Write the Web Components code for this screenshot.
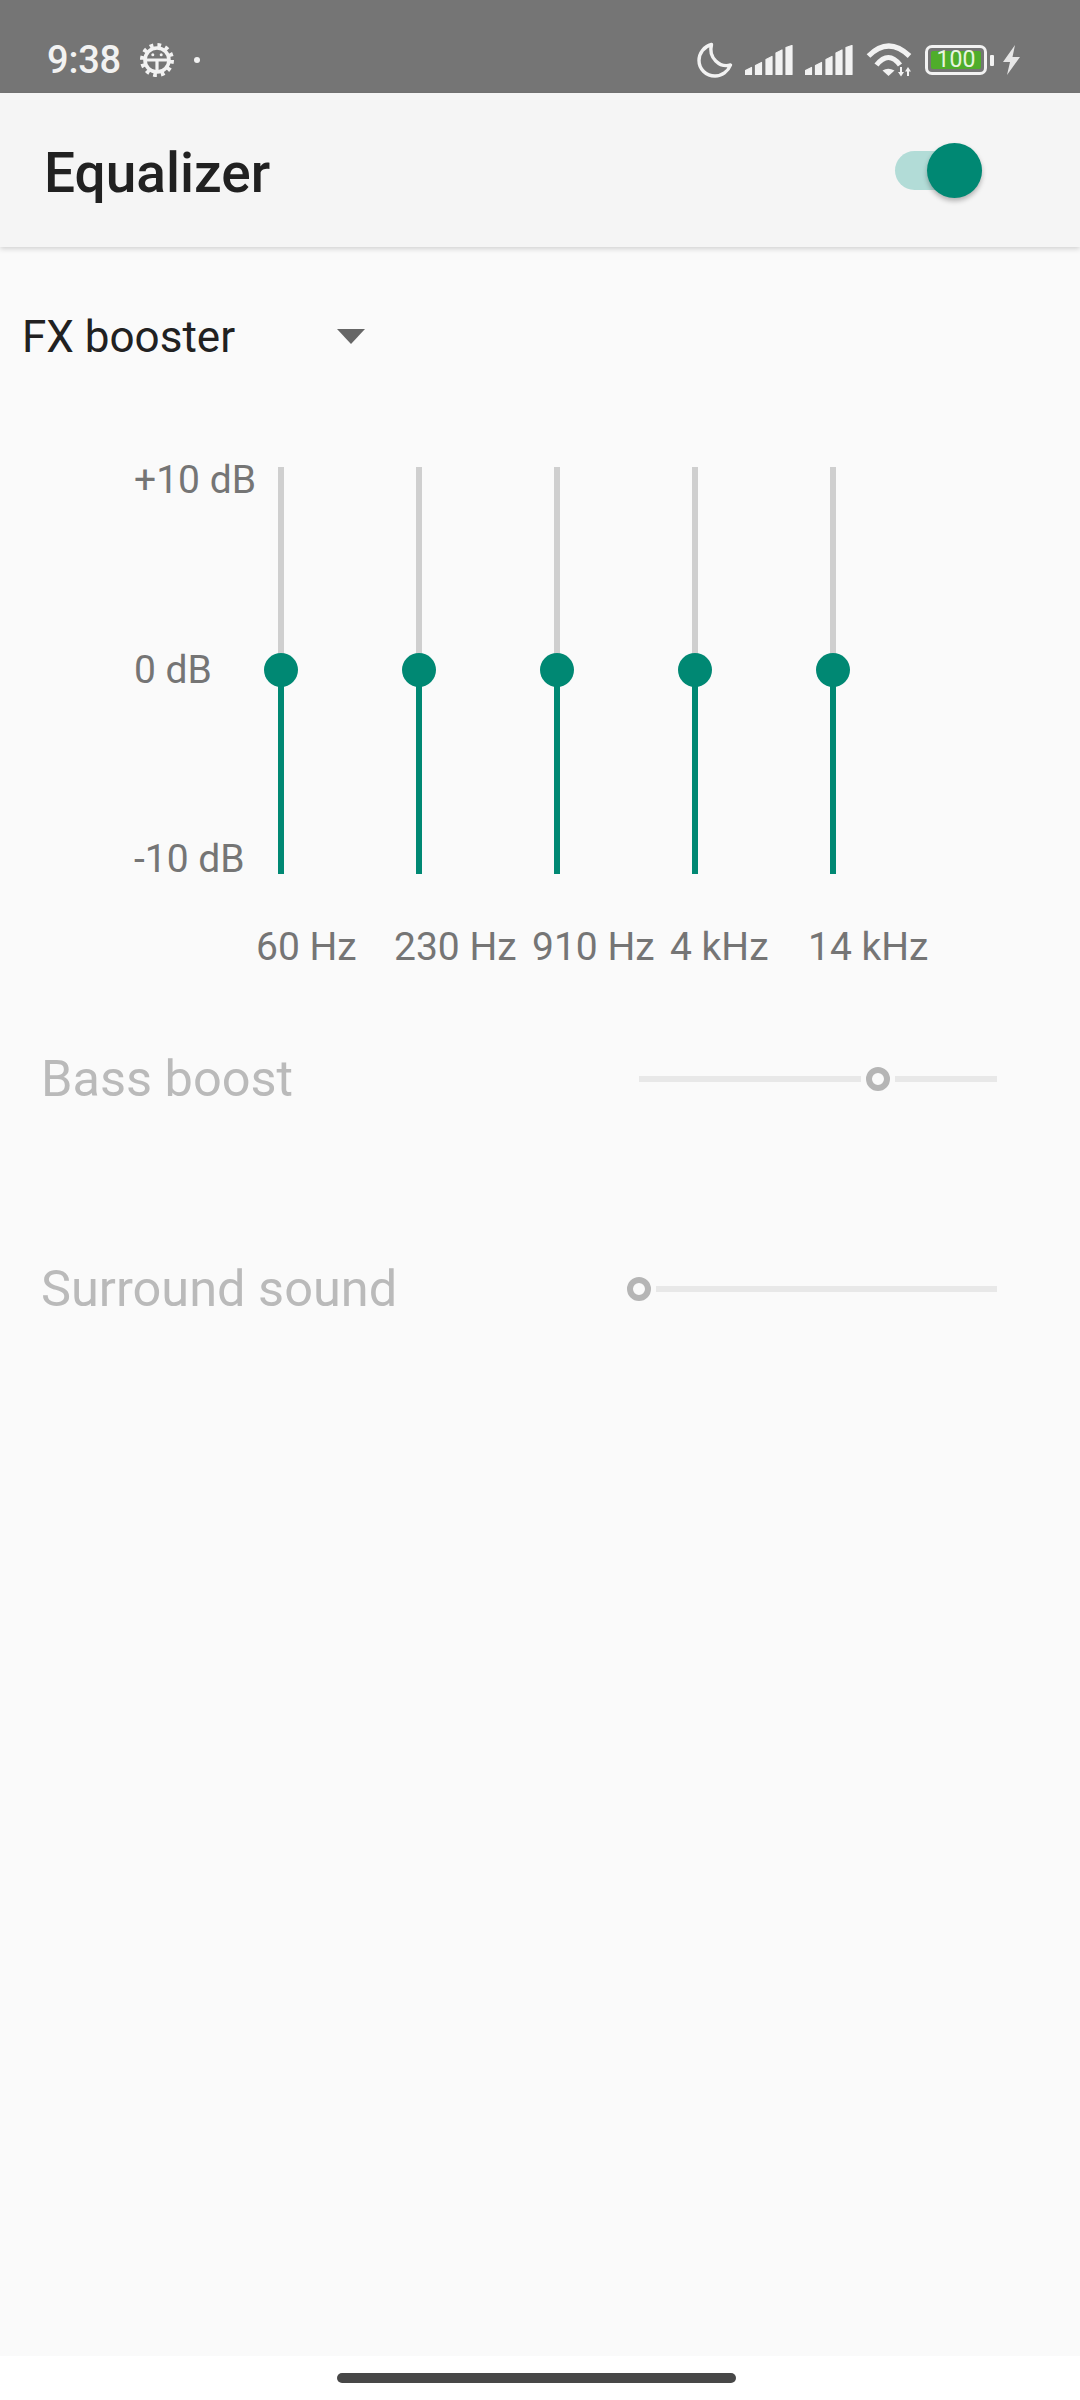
<!DOCTYPE html>
<html><head><meta charset="utf-8">
<style>
html,body{margin:0;padding:0;background:#fafafa}
body{width:1080px;height:2400px;display:flex;flex-direction:column;font-family:Roboto,"Liberation Sans",sans-serif;overflow:hidden}
</style></head><body>
<eq-status></eq-status>
<eq-appbar>Equalizer</eq-appbar>
<eq-main>
  <eq-preset>FX booster</eq-preset>
  <eq-bands></eq-bands>
  <eq-effect label="Bass boost" value="0.667" style="margin-top:80px"></eq-effect>
  <eq-effect label="Surround sound" value="0" style="margin-top:152px"></eq-effect>
</eq-main>
<eq-nav></eq-nav>
<script>
function def(name, html, init){
  customElements.define(name, class extends HTMLElement{
    constructor(){super();const r=this.attachShadow({mode:'open'});r.innerHTML=html;}
    connectedCallback(){if(init)init(this,this.shadowRoot);}
  });
}
const sig=`<svg width="48" height="30" viewBox="0 0 48 30"><g fill="#f2f2f2" stroke="#f2f2f2" stroke-width="1.200" stroke-linejoin="round"><path d="M.5 29.500V25.500L6.500 22.500V29.500Z"/><path d="M10.500 29.500V20.500L16.500 17.500V29.500Z"/><path d="M21 29.500V14.500L27 11.500V29.500Z"/><path d="M31 29.500V8L37 5V29.500Z"/><path d="M41 29.500V2.500L47 .5V29.500Z"/></g></svg>`;
def('eq-status',`<style>
:host{display:flex;align-items:center;box-sizing:border-box;height:93px;background:#757575;color:#f2f2f2;padding:27px 0 0 47px;flex:none}
.t{font:500 38px/1 Roboto,sans-serif;width:71px;letter-spacing:-.2px}
.gear{margin-left:22px;display:block}
.dot{width:6px;height:6px;border-radius:50%;background:#f2f2f2;margin-left:20px}
.r{margin-left:auto;display:flex;align-items:center;margin-right:59px;height:36px}
svg{display:block;flex:none}
.bat{position:relative;box-sizing:border-box;width:62px;height:30px;border:3px solid #f2f2f2;border-radius:7px;padding:3px;margin-left:13px;display:flex}
.bat b{flex:1;background:#4fad2b;border-radius:2px;font:400 23px/18px Roboto,sans-serif;color:#e8f5e0;text-align:center;letter-spacing:0}
.nub{width:4px;height:11px;background:#f2f2f2;border-radius:1px;margin-left:3px}
</style>
<span class="t">9:38</span>
<svg class="gear" width="34" height="34" viewBox="0 0 34 34" fill="none" stroke="#f2f2f2">
 <circle cx="17" cy="17" r="12" stroke-width="3.600"/>
 <circle cx="17" cy="17" r="15" stroke-width="4" stroke-dasharray="3.700 4.154"/>
 <path d="M5 17H29M17 17V29" stroke-width="3.200"/>
 <circle cx="12.800" cy="11.800" r="1.500" fill="#f2f2f2" stroke="none"/><circle cx="21.200" cy="11.800" r="1.500" fill="#f2f2f2" stroke="none"/>
</svg>
<span class="dot"></span>
<span class="r">
 <svg width="36" height="36" viewBox="0 0 36 36" fill="none" stroke="#f2f2f2" stroke-width="3.400"><path d="M14.500 2.500C7 4.500 2 11 2 18.500 2 27 9 34 18 34 25 34 31 29.500 33.500 23 23 26 11 16 14.500 2.500Z" stroke-linejoin="round"/></svg>
 <span style="margin-left:12px">${sig}</span>
 <span style="margin-left:12px">${sig}</span>
 <svg style="margin-left:13px" width="46" height="34" viewBox="0 0 46 34" fill="none" stroke="#f2f2f2" stroke-width="5.200"><path d="M2.500 13Q22.500 -7 43.500 13"/><path d="M10.500 22Q22.500 7 34 22"/><path d="M16.500 27.500Q22 24 28.500 27.500L22.500 33Z" fill="#f2f2f2" stroke="none"/><path d="M32 29h2v-5h2v5h2l-3 4.500zM39 28.500l3-4.500 3 4.500h-2v4.500h-2v-4.500z" fill="#f2f2f2" stroke="none"/></svg>
 <span class="bat"><b>100</b></span><span class="nub"></span>
 <svg style="margin-left:8px" width="19" height="30" viewBox="0 0 19 30"><path d="M13 0 1 17h7L5 30 18 12h-7.500z" fill="#e6e6e6"/></svg>
</span>`);
def('eq-appbar',`<style>
:host{display:flex;align-items:center;box-sizing:border-box;height:154px;flex:none;background:#f5f5f5;box-shadow:0 2px 5px rgba(0,0,0,.16);padding:0 98px 0 44px;position:relative;z-index:1;
font:500 55px/1 Roboto,sans-serif;color:#212121}
.txt{flex:1;padding-top:6px}
.sw{position:relative;width:87px;height:39px;background:#b2dcd7;border-radius:20px}
.th{position:absolute;right:0;top:-8px;width:55px;height:55px;border-radius:50%;background:#008873;box-shadow:0 3px 5px rgba(0,0,0,.28)}
</style><span class="txt"><slot></slot></span><span class="sw"><span class="th"></span></span>`);
def('eq-main',`<style>:host{display:flex;flex-direction:column;flex:1;background:#fafafa}</style><slot></slot>`);
def('eq-preset',`<style>
:host{display:flex;align-items:center;box-sizing:border-box;height:180px;padding:0 0 0 22px;font:400 44px/1 Roboto,sans-serif;color:#212121}
.t{width:316px}
.a{width:0;height:0;border-left:14px solid transparent;border-right:14px solid transparent;border-top:15px solid #666;margin-top:-2px;margin-left:-1px}
</style><span class="t"><slot></slot></span><span class="a"></span>`);
def('eq-band',`<style>
:host{display:flex;flex-direction:column;width:138px;flex:none}
.v{position:relative;width:6px;height:407px;margin-left:66px;background:linear-gradient(#cfcfcf 50%,#008873 50%)}
.k{position:absolute;left:-14px;top:186px;width:34px;height:34px;border-radius:50%;background:#008873}
.l{margin-top:50px;padding-left:44px;font:400 39px/46px Roboto,sans-serif;color:#757575;white-space:nowrap}
</style><div class="v"><span class="k"></span></div><div class="l"><slot></slot></div>`);
def('eq-bands',`<style>
:host{display:flex;margin-top:40px;padding-left:134px}
.s{display:flex;flex-direction:column;justify-content:space-between;width:78px;height:407px;font:400 39px/46px Roboto,sans-serif;color:#757575;white-space:nowrap;box-sizing:border-box}
.s span{display:block}
.s span:first-child{margin-top:-10px}
.s span:last-child{margin-bottom:-8px}
</style><div class="s"><span>+10 dB</span><span>0 dB</span><span>-10 dB</span></div>
<eq-band>60 Hz</eq-band><eq-band>230 Hz</eq-band><eq-band>910 Hz</eq-band><eq-band>4 kHz</eq-band><eq-band>14 kHz</eq-band>`);
def('eq-effect',`<style>
:host{display:flex;align-items:center;height:58px;padding:0 83px 0 41px;font:400 50.500px/58px Roboto,sans-serif;color:#bababa}
.t{flex:1;white-space:nowrap;padding-bottom:1px}
.sl{display:flex;align-items:center;width:358px;flex:none;position:relative}
.a,.b{height:6px;background:#e8e8e8}
.th{box-sizing:border-box;position:absolute;top:50%;margin:-12px 0 0 -12px;width:24px;height:24px;border-radius:50%;border:6px solid #b5b5b5;background:#fafafa}
.g{width:34px;flex:none}
</style><span class="t"></span><span class="sl"><span class="a"></span><span class="g"></span><span class="b"></span><span class="th"></span></span>`,
(el,r)=>{
  r.querySelector('.t').textContent=el.getAttribute('label');
  const v=parseFloat(el.getAttribute('value')),W=358;
  const x=Math.round(v*W);
  const left=Math.max(0,x-17),right=W-(x+17);
  r.querySelector('.a').style.width=left+'px';
  r.querySelector('.b').style.width=right+'px';
  if(v===0){r.querySelector('.g').style.width='17px';r.querySelector('.a').style.display='none';}
  r.querySelector('.th').style.left=x+'px';
});
def('eq-nav',`<style>
:host{display:flex;justify-content:center;align-items:center;height:44px;flex:none;background:#fff;box-sizing:border-box}
i{display:block;width:399px;height:10px;border-radius:5px;background:#474747;margin-left:-7px;margin-top:-1px}
</style><i></i>`);
</script>
</body></html>
